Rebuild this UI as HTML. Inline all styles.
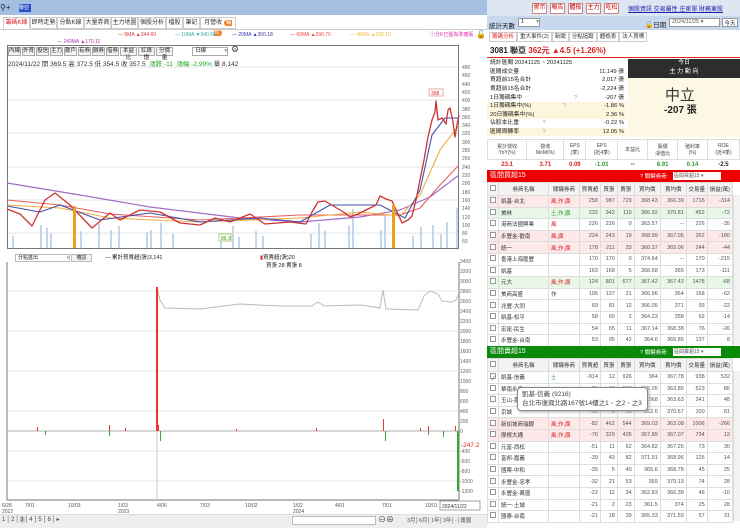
<!DOCTYPE html>
<html><head><meta charset="utf-8"><style>
*{margin:0;padding:0;box-sizing:border-box}
body{width:740px;height:528px;overflow:hidden;background:#fff;font-family:"Liberation Sans","Noto Sans CJK TC",sans-serif;font-size:7px;color:#222;position:relative}
.a{position:absolute;white-space:nowrap}
.btn{position:absolute;border:1px solid #c88;background:#fff;color:#c00;font-size:6px;height:11px;line-height:9px;text-align:center}
.tab{position:absolute;top:17px;height:12px;border:1px solid #ccc;background:#fff;font-size:6px;line-height:10px;text-align:center;color:#333}
.tb{position:absolute;top:47px;height:9px;border:1px solid #aaa;background:#f4f4f4;font-size:5.5px;line-height:7px;text-align:center}
table{border-collapse:collapse;font-size:5.5px}
.t td{border:1px solid #ddd;height:11.6px;padding:0 2px;text-align:right;color:#555}
.t td:nth-child(2),.t td:nth-child(3){text-align:left;color:#333}
.t td:nth-child(3){color:#d22}
.t tr.p td{background:#fde8ea}
.t tr.g td{background:#e8f7e8}
.t th{border:1px solid #ddd;height:13px;font-weight:normal;color:#333;background:#f3f3f3;font-size:5.5px}
.cb{display:inline-block;width:6px;height:6px;border:1px solid #999;background:#fff}
.st td{font-size:5.8px;height:8.6px;line-height:8px;padding:0 3px}
</style></head><body>
<div class="a" style="left:0;top:0;width:487px;height:15px;background:#a4bfe2"></div>
<div class="a" style="left:0;top:3px;font-size:8px;color:#223">⚲+</div>
<div class="a" style="left:19px;top:4px;width:12px;height:8px;background:#2a4fc8;color:#fff;font-size:5px;line-height:8px">聯亞</div>
<div class="tab" style="left:3px;width:27px;color:#d22;border-bottom-color:#fff">籌碼K線</div>
<div class="tab" style="left:30px;width:27px">即時走勢</div>
<div class="tab" style="left:57px;width:27px">分點K線</div>
<div class="tab" style="left:84px;width:27px">大量券商</div>
<div class="tab" style="left:111px;width:27px">主力地圖</div>
<div class="tab" style="left:138px;width:28px">個股分析</div>
<div class="tab" style="left:166px;width:17px">檔股</div>
<div class="tab" style="left:183px;width:17px">筆記</div>
<div class="tab" style="left:200px;width:36px">月營收 <span style="background:#f07a20;color:#fff;border-radius:4px;padding:0 2px">最新</span></div>
<div class="a" style="left:0;top:29px;width:487px;height:1px;background:#ccc"></div>
<div class="a" style="top:32px;left:118px;font-size:5px;color:#d33">— 5MA ▲344.60</div>
<div class="a" style="top:32px;left:175px;font-size:5px;color:#3a9">— 10MA ▼340.60</div>
<div class="a" style="top:32px;left:232px;font-size:5px;color:#33a">— 20MA ▲350.18</div>
<div class="a" style="top:32px;left:290px;font-size:5px;color:#e44">— 60MA ▲290.70</div>
<div class="a" style="top:32px;left:350px;font-size:5px;color:#eb3">— 40MA ▲338.10</div>
<div class="a" style="top:39px;left:57px;font-size:5px;color:#a3a">— 240MA ▲170.11</div>
<div class="a" style="top:31px;left:430px;font-size:5px;color:#d3a">ⓘ分K已盤為準確版</div>
<div class="a" style="top:30px;left:476px;font-size:8px">🔓</div>
<div class="a" style="left:7px;top:45px;width:452px;height:204px;border:1px solid #777"></div>
<div class="tb" style="left:8px;width:13px">內線</div><div class="tb" style="left:22px;width:13px">外資</div><div class="tb" style="left:36px;width:13px">投信</div><div class="tb" style="left:50px;width:13px">主力</div><div class="tb" style="left:64px;width:13px">散戶</div><div class="tb" style="left:78px;width:13px">有券</div><div class="tb" style="left:92px;width:13px">融券</div><div class="tb" style="left:106px;width:13px">借券</div><div class="tb" style="left:120px;width:17px">本益比</div><div class="tb" style="left:138px;width:17px">紅綠燈</div><div class="tb" style="left:156px;width:17px">分價量</div>
<div class="tb" style="left:192px;width:36px;text-align:left;padding-left:2px;background:#fff">日線<span style="float:right;color:#888">▾</span></div>
<div class="a" style="left:231px;top:44px;font-size:9px;color:#444">⚙</div>
<div class="a" style="left:8px;top:58px;font-size:6.5px;color:#333">2024/11/22 開 369.5 高 372.5 低 354.5 收 357.5 &nbsp;<span style="color:#2a2">漲跌 -11 &nbsp;漲幅 -2.99%</span> 量 8,142</div>
<svg class="a" style="left:0;top:0" width="487" height="514">
<g stroke="#e6e6e6" stroke-width="1">
<line x1="8" y1="67" x2="458" y2="67"/><line x1="8" y1="100" x2="458" y2="100"/><line x1="8" y1="133" x2="458" y2="133"/><line x1="8" y1="167" x2="458" y2="167"/><line x1="8" y1="200" x2="458" y2="200"/><line x1="8" y1="233" x2="458" y2="233"/>
<line x1="8" y1="291" x2="458" y2="291"/><line x1="8" y1="331" x2="458" y2="331"/><line x1="8" y1="371" x2="458" y2="371"/><line x1="8" y1="411" x2="458" y2="411"/><line x1="8" y1="451" x2="458" y2="451"/><line x1="8" y1="481" x2="458" y2="481"/>
</g>
<g fill="#c4d6ea">
<path d="M12 248V236h2v12M40 248V225h2v23M46 248V228h2v20M50 248V233h2v15M80 248V231h2v17M98 248V224h2v24M110 248V230h2v18M118 248V226h2v22M146 248V232h2v16M150 248V230h2v18M160 248V223h2v25M172 248V234h2v14M220 248V236h2v12M232 248V226h2v22M238 248V237h2v11M255 248V231h2v17M262 248V236h2v12M310 248V234h2v14M318 248V223h2v25M324 248V231h2v17M348 248V225h2v23M352 248V209h2v39M380 248V230h2v18M384 248V216h2v32M412 248V236h2v12M420 248V227h2v21M432 248V225h2v23M440 248V234h2v14M446 248V222h2v26M456 248V208h2v40"/>
</g>
<g stroke-linejoin="round" fill="none">
<polyline stroke="#a36cc9" stroke-width="1.2" points="7,183 80,195 150,207 240,218 300,222 360,217 400,210 430,197 459,175"/>
<polyline stroke="#e86060" stroke-width="1.1" points="7,200 60,205 110,214 200,220 300,215 400,215 420,208 440,185 459,165"/>
<polyline stroke="#efb040" stroke-width="1.1" points="7,205 60,208 110,218 200,222 300,218 360,212 400,216 420,195 440,150 459,125"/>
<polyline stroke="#4050b0" stroke-width="1.1" points="7,206 40,212 60,205 100,220 150,213 200,222 260,218 300,222 330,205 380,205 405,218 420,190 432,135 445,118 459,118"/>
<polyline stroke="#c33" stroke-width="1.3" points="7,209 20,214 32,226 45,200 55,193 70,205 92,228 110,213 120,220 140,210 160,212 180,223 200,225 215,218 230,222 250,214 265,224 290,222 306,224 312,212 318,202 325,201 335,207 345,213 350,217 358,214 368,209 376,205 380,196 386,199 392,201 398,214 402,223 408,220 412,216 416,200 420,180 424,160 428,137 432,120 435,112 436,101 438,120 442,118 446,124 448,110 450,108 453,122 455,137 457,125 459,115"/>
</g>
<g fill="#f0a020"><path d="M73 248V206h3v42zM392 248V205h3v43z"/></g>
<g font-size="5">
<rect x="429" y="89" width="14" height="7" fill="#fff" stroke="#eaa"/><text x="431" y="95" fill="#d22">398</text>
<rect x="219" y="234" width="12" height="7" fill="#ffe" stroke="#ac8"/><text x="221" y="240" fill="#393">86.3</text>
</g>
<g fill="#666" font-size="5">
<text x="462" y="69">480</text><text x="462" y="77">460</text><text x="462" y="86">440</text><text x="462" y="94">420</text><text x="462" y="102">400</text><text x="462" y="111">380</text><text x="462" y="119">360</text><text x="462" y="127">340</text><text x="462" y="135">320</text><text x="462" y="144">300</text><text x="462" y="152">280</text><text x="462" y="160">260</text><text x="462" y="169">240</text><text x="462" y="177">220</text><text x="462" y="185">200</text><text x="462" y="194">180</text><text x="462" y="202">160</text><text x="462" y="210">140</text><text x="462" y="219">120</text><text x="462" y="227">100</text><text x="462" y="235">80</text><text x="462" y="243">60</text>
<text x="460" y="263">3400</text><text x="460" y="273">3200</text><text x="460" y="283">3000</text><text x="460" y="293">2800</text><text x="460" y="303">2600</text><text x="460" y="313">2400</text><text x="460" y="323">2200</text><text x="460" y="333">2000</text><text x="460" y="343">1800</text><text x="460" y="353">1600</text><text x="460" y="363">1400</text><text x="460" y="373">1200</text><text x="460" y="383">1000</text><text x="460" y="393">800</text><text x="460" y="403">600</text><text x="460" y="413">400</text><text x="460" y="423">200</text><text x="460" y="433">0</text><text x="460" y="453">-400</text><text x="460" y="463">-600</text><text x="460" y="473">-800</text><text x="460" y="483">-1000</text><text x="460" y="493">-1200</text>
</g>
<text x="461" y="447" font-size="6.5" fill="#d22">-247.2</text>
<line x1="7" y1="262" x2="7" y2="500" stroke="#777"/>
<line x1="7" y1="500" x2="459" y2="500" stroke="#777"/>
<line x1="459" y1="262" x2="459" y2="500" stroke="#777"/>
<line x1="8" y1="431" x2="458" y2="431" stroke="#999" stroke-width="0.8"/>
<line x1="157" y1="300" x2="157" y2="500" stroke="#ccc" stroke-width="1"/>
<polyline fill="none" stroke="#bbb" stroke-width="1" points="157,288 160,300 165,308 200,309 240,304 280,306 312,306 318,302 324,306 360,305 380,308 383,290 386,309 418,310 424,296 430,291 438,294 442,301 452,302 456,300 458,295"/>
<path d="M156 431V287h2v144z" fill="#e33"/>
<g fill="#e33"><path d="M37 431v-4h1v4M109 431v-6h1v6M125 431v-3h1v3M158 431v-6h1v6M236 431v-2h1v2M316 431v-3h1v3M383 431v-12h1v12M420 431v-3h1v3M428 431v-5h1v5M455 431v-5h1v5"/></g>
<g fill="#3a3"><path d="M45 431v4h1v-4M109 431v5h1v-5M160 431v10h1v-10M385 431v10h1v-10M428 431v4h1v-4M443 431v6h1v-6M457 431v60h2v-60"/></g>
<g fill="#555" font-size="5">
<text x="2" y="507">6/28</text><text x="2" y="513">2022</text><text x="25" y="507">7/01</text><text x="68" y="507">10/03</text><text x="118" y="507">1/03</text><text x="118" y="513">2023</text><text x="157" y="507">4/06</text><text x="200" y="507">7/03</text><text x="245" y="507">10/02</text><text x="293" y="507">1/02</text><text x="293" y="513">2024</text><text x="335" y="507">4/01</text><text x="382" y="507">7/01</text><text x="425" y="507">10/01</text>
</g>
<rect x="440" y="501" width="40" height="9" fill="#fff" stroke="#666" stroke-width="0.6"/><text x="442" y="508" font-size="5" fill="#333">2024/11/22</text>
</svg>
<div class="a" style="left:15px;top:254px;width:55px;height:8px;border:1px solid #bbb;font-size:5px;line-height:6px;padding-left:2px">分點進出 <span style="float:right;color:#888">▾</span></div>
<div class="a" style="left:71px;top:254px;width:21px;height:8px;border:1px solid #bbb;background:#f2f2f2;font-size:5px;line-height:6px;text-align:center">確認</div>
<div class="a" style="left:105px;top:253px;font-size:5.5px">— 累計買賣超(張)3,141</div>
<div class="a" style="left:260px;top:253px;font-size:5.5px"><span style="color:#c22">▮</span>買賣超(張)20</div>
<div class="a" style="left:266px;top:261px;font-size:5.5px">買張 28 賣張 8</div>
<div class="a" style="left:0;top:514px;width:487px;height:14px;background:#eee;border-top:1px solid #ddd"></div>
<div class="a" style="left:2px;top:516px;font-size:6px;color:#444;letter-spacing:1px">1│2│<span style="background:#ccc">3</span>│4│5│6│▸</div>
<div class="a" style="left:292px;top:516px;width:84px;height:9px;border:1px solid #bbb;background:#fff"></div>
<div class="a" style="left:378px;top:514px;font-size:8px;color:#444">⊖⊕</div>
<div class="a" style="left:407px;top:516px;font-size:5.5px;color:#555">3月│6月│1年│3年│-│畫圖</div>
<div class="a" style="left:487px;top:0;width:253px;height:16px;background:#dde7f3"></div>
<div class="btn" style="left:532px;top:3px;width:15px">警示</div><div class="btn" style="left:550px;top:3px;width:15px">報告</div><div class="btn" style="left:568px;top:3px;width:15px">體檢</div><div class="btn" style="left:586px;top:3px;width:15px">主力</div><div class="btn" style="left:604px;top:3px;width:15px">吃松</div>
<div class="a" style="left:628px;top:4px;font-size:6px;color:#22a;text-decoration:underline">個股資訊 交易屬性 庄家單 財務東股</div>
<div class="a" style="left:487px;top:16px;width:253px;height:14px;background:#c7d8ee"></div>
<div class="a" style="left:489px;top:20px;font-size:6.5px">統計天數</div>
<div class="a" style="left:518px;top:18px;width:22px;height:9px;border:1px solid #999;background:#fff;font-size:5.5px;padding-left:2px">1<span style="float:right;color:#888">▾</span></div>
<div class="a" style="left:645px;top:19px;font-size:6.5px">🔓日期</div>
<div class="a" style="left:669px;top:18px;width:51px;height:9px;border:1px solid #999;background:#fff;font-size:5.5px;padding-left:2px;color:#555">2024/11/25 ▾</div>
<div class="a" style="left:722px;top:18px;width:16px;height:9px;border:1px solid #999;background:#fff;font-size:5.5px;text-align:center">今天</div>
<div class="a" style="left:489px;top:32px;font-size:5.5px;color:#333"><span style="border:1px solid #ccc;padding:1px 2px;color:#d22">籌碼分析</span><span style="border:1px solid #ccc;padding:1px 2px">重大事件(2)</span><span style="border:1px solid #ccc;padding:1px 2px">新聞</span><span style="border:1px solid #ccc;padding:1px 2px">分點追蹤</span><span style="border:1px solid #ccc;padding:1px 2px">體檢表</span><span style="border:1px solid #ccc;padding:1px 2px">法人買標</span></div>
<div class="a" style="left:490px;top:45px;font-size:8px;font-weight:bold">3081 聯亞 <span style="color:#d22">362元 ▲4.5 (+1.26%)</span></div>
<div class="a" style="left:487px;top:57px;width:253px;height:1px;background:#d22"></div>
<table class="a st" style="left:487px;top:59px;width:140px">
<tr><td style="text-align:left">統計區間 20241125 ~ 20241125</td><td></td></tr>
<tr><td style="text-align:left">區間成交量</td><td style="text-align:right">11,149 張</td></tr>
<tr><td style="text-align:left">買超前15名合計</td><td style="text-align:right">2,017 張</td></tr>
<tr><td style="text-align:left">賣超前15名合計</td><td style="text-align:right">-2,224 張</td></tr>
<tr><td style="text-align:left">1日籌碼集中 <span style="color:#99b;margin-left:50px">?</span></td><td style="text-align:right">-207 張</td></tr>
<tr style="background:#fdf5dc"><td style="text-align:left">1日籌碼集中(%) <span style="color:#99b;margin-left:30px">?</span></td><td style="text-align:right">-1.86 %</td></tr>
<tr style="background:#fdf5dc"><td style="text-align:left">20日籌碼集中(%)</td><td style="text-align:right">2.36 %</td></tr>
<tr><td style="text-align:left">佔股本比重 <span style="color:#99b;margin-left:22px">?</span></td><td style="text-align:right">-0.22 %</td></tr>
<tr style="background:#fdf5dc"><td style="text-align:left">區間周轉率 <span style="color:#99b;margin-left:22px">?</span></td><td style="text-align:right">12.05 %</td></tr>
</table>
<div class="a" style="left:628px;top:59px;width:112px;height:19px;background:#2d2d2d;color:#fff;font-size:6px;text-align:center;line-height:9px">今日<br>主 力 動 向</div>
<div class="a" style="left:628px;top:78px;width:112px;height:59px;background:#fdf8e4"></div>
<div class="a" style="left:665px;top:84px;font-size:15px;color:#333">中立</div>
<div class="a" style="left:664px;top:101px;font-size:10px;font-weight:bold;color:#222">-207 張</div>
<table class="a" style="left:487px;top:139px;width:253px;font-size:5px;text-align:center">
<tr style="height:20px;color:#444"><td style="border:1px solid #ddd">累計營收<br>YoY(%)</td><td style="border:1px solid #ddd">營收<br>MoM(%)</td><td style="border:1px solid #ddd">EPS<br>(季)</td><td style="border:1px solid #ddd">EPS<br>(近4季)</td><td style="border:1px solid #ddd">本益比</td><td style="border:1px solid #ddd">股價<br>淨值比</td><td style="border:1px solid #ddd">殖利率<br>(%)</td><td style="border:1px solid #ddd">ROE<br>(近4季)</td></tr>
<tr style="height:10px;font-size:6px;font-weight:bold"><td style="color:#d22">23.1</td><td style="color:#d22">3.71</td><td style="color:#d22">0.09</td><td style="color:#393">-1.01</td><td>--</td><td style="color:#393">8.91</td><td style="color:#393">0.14</td><td>-2.5</td></tr>
</table>
<div class="a" style="left:487px;top:170px;width:253px;height:12px;background:#e00;color:#fff;font-size:7px;line-height:12px;padding-left:3px">區間買超15</div>
<div class="a" style="left:640px;top:172px;font-size:5.5px;color:#fff">? 關鍵券商:</div>
<div class="a" style="left:673px;top:172px;width:48px;height:8px;background:#fff;font-size:5px;padding-left:1px;color:#555">區間買超15 ▾</div>
<table class="a t" style="left:487px;top:182px;width:246px">
<tr><th style="width:10px"><span class="cb"></span></th><th style="width:50px">券商名稱</th><th style="width:31px">關鍵券商</th><th>買賣超</th><th>買張</th><th>賣張</th><th>買均價</th><th>賣均價</th><th>交易量</th><th>損益(萬)</th></tr>
<tr class="p"><td><span class="cb"></span></td><td>凱基-台北</td><td>風,作,廣</td><td>258</td><td>987</td><td>729</td><td>368.43</td><td>366.39</td><td>1716</td><td>-314</td></tr>
<tr class="g"><td><span class="cb"></span></td><td>美林</td><td style="color:#393">土,作,廣</td><td>232</td><td>342</td><td>110</td><td>366.92</td><td>370.81</td><td>452</td><td>-72</td></tr>
<tr><td><span class="cb"></span></td><td>港商法國興業</td><td>風</td><td>226</td><td>226</td><td>0</td><td>363.57</td><td>--</td><td>226</td><td>-35</td></tr>
<tr class="p"><td><span class="cb"></span></td><td>永豐金-歡南</td><td>風,廣</td><td>224</td><td>243</td><td>19</td><td>368.99</td><td>367.05</td><td>262</td><td>-180</td></tr>
<tr class="p"><td><span class="cb"></span></td><td>統一</td><td>風,作,廣</td><td>178</td><td>211</td><td>33</td><td>360.37</td><td>365.06</td><td>244</td><td>-44</td></tr>
<tr><td><span class="cb"></span></td><td>香港上海匯豐</td><td></td><td>170</td><td>170</td><td>0</td><td>374.64</td><td>--</td><td>170</td><td>-215</td></tr>
<tr><td><span class="cb"></span></td><td>凱基</td><td></td><td>163</td><td>168</td><td>5</td><td>368.68</td><td>365</td><td>173</td><td>-111</td></tr>
<tr class="g"><td><span class="cb"></span></td><td>元大</td><td>風,作,廣</td><td>124</td><td>801</td><td>677</td><td>367.42</td><td>367.42</td><td>1478</td><td>-68</td></tr>
<tr><td><span class="cb"></span></td><td>美商高盛</td><td style="color:#333">作</td><td>106</td><td>137</td><td>31</td><td>366.96</td><td>364</td><td>168</td><td>-62</td></tr>
<tr><td><span class="cb"></span></td><td>兆豐-大同</td><td></td><td>69</td><td>81</td><td>12</td><td>366.05</td><td>371</td><td>93</td><td>-22</td></tr>
<tr><td><span class="cb"></span></td><td>凱基-松平</td><td></td><td>58</td><td>60</td><td>2</td><td>364.23</td><td>358</td><td>62</td><td>-14</td></tr>
<tr><td><span class="cb"></span></td><td>宏遠-民生</td><td></td><td>54</td><td>65</td><td>11</td><td>367.14</td><td>368.38</td><td>76</td><td>-26</td></tr>
<tr><td><span class="cb"></span></td><td>永豐金-台南</td><td></td><td>53</td><td>95</td><td>42</td><td>364.6</td><td>369.86</td><td>137</td><td>8</td></tr>
</table>
<div class="a" style="left:733px;top:195px;width:7px;height:150px;background:#f2f2f2;border-left:1px solid #ddd"></div>
<div class="a" style="left:487px;top:346px;width:253px;height:12px;background:#0a8a0a;color:#fff;font-size:7px;line-height:12px;padding-left:3px">區間賣超15</div>
<div class="a" style="left:640px;top:348px;font-size:5.5px;color:#fff">? 關鍵券商:</div>
<div class="a" style="left:673px;top:348px;width:48px;height:8px;background:#fff;font-size:5px;padding-left:1px;color:#555">區間賣超15 ▾</div>
<table class="a t" style="left:487px;top:358px;width:246px">
<tr><th style="width:10px"><span class="cb"></span></th><th style="width:50px">券商名稱</th><th style="width:31px">關鍵券商</th><th>買賣超</th><th>買張</th><th>賣張</th><th>買均價</th><th>賣均價</th><th>交易量</th><th>損益(萬)</th></tr>
<tr><td><span class="cb">✓</span></td><td>凱基-信義</td><td style="color:#393">土</td><td>-914</td><td>12</td><td>926</td><td>364</td><td>367.78</td><td>938</td><td>532</td></tr>
<tr><td><span class="cb"></span></td><td>華南永昌</td><td></td><td>-31</td><td>11</td><td>511</td><td>365.05</td><td>363.85</td><td>523</td><td>86</td></tr>
<tr><td><span class="cb"></span></td><td>玉山-嘉</td><td></td><td>-23</td><td>9</td><td>332</td><td>368</td><td>363.63</td><td>341</td><td>48</td></tr>
<tr><td><span class="cb"></span></td><td>京城</td><td></td><td>-90</td><td>5</td><td>95</td><td>362.6</td><td>370.57</td><td>100</td><td>81</td></tr>
<tr class="p"><td><span class="cb"></span></td><td>新加坡商瑞銀</td><td>風,作,廣</td><td>-82</td><td>462</td><td>544</td><td>369.03</td><td>363.08</td><td>1006</td><td>-266</td></tr>
<tr class="p"><td><span class="cb"></span></td><td>摩根大通</td><td>風,作,廣</td><td>-76</td><td>329</td><td>405</td><td>367.89</td><td>367.07</td><td>734</td><td>12</td></tr>
<tr><td><span class="cb"></span></td><td>元富-西松</td><td></td><td>-51</td><td>11</td><td>62</td><td>364.82</td><td>367.26</td><td>73</td><td>30</td></tr>
<tr><td><span class="cb"></span></td><td>富邦-嘉義</td><td></td><td>-39</td><td>43</td><td>82</td><td>371.91</td><td>368.96</td><td>125</td><td>14</td></tr>
<tr><td><span class="cb"></span></td><td>國票-中和</td><td></td><td>-35</td><td>5</td><td>40</td><td>365.6</td><td>368.78</td><td>45</td><td>25</td></tr>
<tr><td><span class="cb"></span></td><td>永豐金-忠孝</td><td></td><td>-32</td><td>21</td><td>53</td><td>369</td><td>370.13</td><td>74</td><td>28</td></tr>
<tr><td><span class="cb"></span></td><td>永豐金-萬盛</td><td></td><td>-22</td><td>12</td><td>34</td><td>362.83</td><td>366.38</td><td>46</td><td>-10</td></tr>
<tr><td><span class="cb"></span></td><td>統一-土城</td><td></td><td>-21</td><td>2</td><td>23</td><td>361.5</td><td>374</td><td>25</td><td>28</td></tr>
<tr><td><span class="cb"></span></td><td>國泰-台南</td><td></td><td>-21</td><td>18</td><td>39</td><td>365.33</td><td>371.59</td><td>57</td><td>31</td></tr>
</table>
<div class="a" style="left:733px;top:371px;width:7px;height:150px;background:#f2f2f2;border-left:1px solid #ddd"></div>
<div class="a" style="left:517px;top:387px;width:131px;height:24px;background:#fff;border:1px solid #888;border-radius:4px;box-shadow:1px 1px 3px #aaa;font-size:6.5px;line-height:9px;padding:2px 4px;color:#444">凱基-信義 (9216)<br>台北市復興北路167號14樓之1、之2、之3</div>
</body></html>
